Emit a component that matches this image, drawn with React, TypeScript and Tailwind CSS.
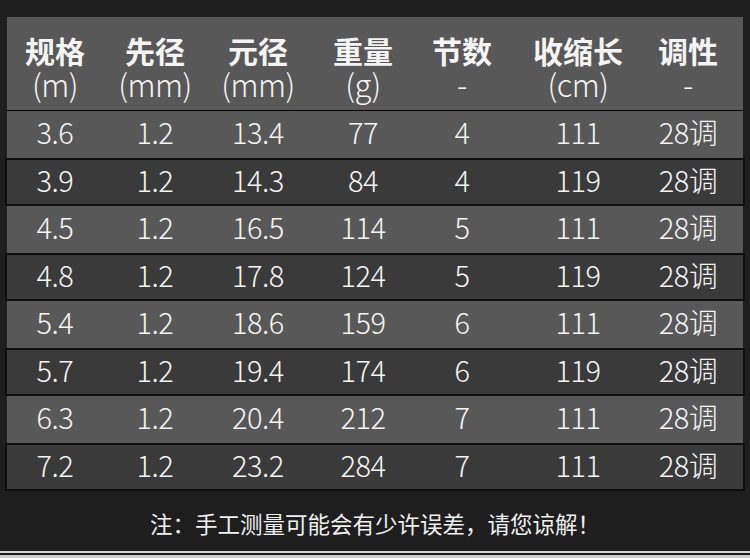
import React from "react";

const cols = "grid grid-cols-[96px_104px_102px_108px_90px_142px_78px]";

const header: [string, string][] = [
  ["规格", "(m)"],
  ["先径", "(mm)"],
  ["元径", "(mm)"],
  ["重量", "(g)"],
  ["节数", "-"],
  ["收缩长", "(cm)"],
  ["调性", "-"],
];

const rows: string[][] = [
  ["3.6", "1.2", "13.4", "77", "4", "111", "28调"],
  ["3.9", "1.2", "14.3", "84", "4", "119", "28调"],
  ["4.5", "1.2", "16.5", "114", "5", "111", "28调"],
  ["4.8", "1.2", "17.8", "124", "5", "119", "28调"],
  ["5.4", "1.2", "18.6", "159", "6", "111", "28调"],
  ["5.7", "1.2", "19.4", "174", "6", "119", "28调"],
  ["6.3", "1.2", "20.4", "212", "7", "111", "28调"],
  ["7.2", "1.2", "23.2", "284", "7", "111", "28调"],
];

export default function App() {
  return (
    <div
      className="w-[750px] h-[558px] bg-[#1e1e1e] text-[#f4f4f4] flex flex-col overflow-hidden"
      style={{ fontFamily: '"Noto Sans CJK SC", "Noto Sans", sans-serif' }}
    >
      <div className="pt-[17px] px-[7px]">
        <div className="w-[736px] bg-[#585858]">
          <div className={`${cols} h-[94px] pt-[16px] border-b border-black`}>
            {header.map(([a, b], i) => (
              <div key={i} className="flex flex-col items-center">
                <div className="text-[30px] font-bold leading-[34px] h-[34px]">{a}</div>
                <div className="text-[31px] font-light leading-[34px] h-[34px] tracking-[-0.5px]">{b}</div>
              </div>
            ))}
          </div>
          {rows.map((r, ri) => {
            const dark = ri % 2 === 1;
            return (
              <div
                key={ri}
                className={
                  dark
                    ? `${cols} h-[48px] bg-[#3a3a3a] border-2 border-[#0e0e0e] -mx-[2px] items-center`
                    : `${cols} h-[47px] items-center`
                }
              >
                {r.map((c, ci) => (
                  <div key={ci} className="text-center text-[29px] font-light leading-none pb-[6px] tracking-[-0.5px]">
                    {c}
                  </div>
                ))}
              </div>
            );
          })}
        </div>
      </div>
      <div className="flex-1 flex items-center justify-center text-[22.5px] pt-[6px] text-[#f0f0f0]">
        注：手工测量可能会有少许误差，请您谅解！
      </div>
      <div className="h-[2px] bg-[#d8d8d8]" />
      <div className="h-[2px] bg-[#1e1e1e]" />
      <div className="h-[3px] bg-[#cfcfcf]" />
    </div>
  );
}
